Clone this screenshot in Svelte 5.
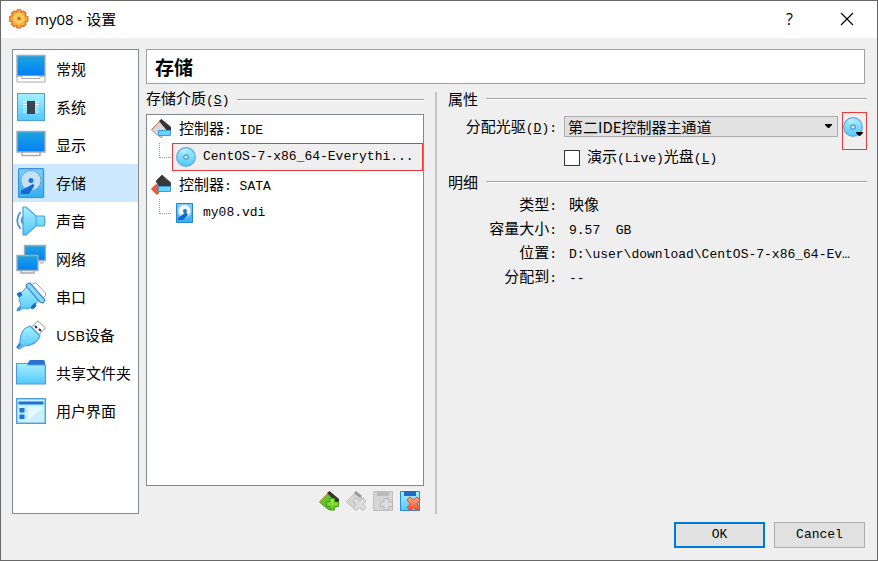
<script>
	const sections = [
		{ id: 'general', label: '常规' },
		{ id: 'system', label: '系统' },
		{ id: 'display', label: '显示' },
		{ id: 'storage', label: '存储' },
		{ id: 'audio', label: '声音' },
		{ id: 'network', label: '网络' },
		{ id: 'serial', label: '串口' },
		{ id: 'usb', label: 'USB设备' },
		{ id: 'shared', label: '共享文件夹' },
		{ id: 'ui', label: '用户界面' }
	];

	const details = [
		{ name: '类型', text: '映像', mono: '' },
		{ name: '容量大小', text: '', mono: '9.57  GB' },
		{ name: '位置', text: '', mono: 'D:\\user\\download\\CentOS-7-x86_64-Ev…' },
		{ name: '分配到', text: '', mono: '--' }
	];

	let current = $state('storage');
	let medium = $state('cd');
	let live = $state(false);
</script>

{#snippet disc()}
	<circle cx="10" cy="10" r="9.3" fill="url(#cyan)" stroke="#6ba7dc" stroke-width="1.3" />
	<path d="M10 10L4 3.5A9 9 0 0 1 10 1.5z" fill="#fff" opacity=".25" />
	<circle cx="10" cy="10" r="2.2" fill="#d8f3fc" stroke="#4d8fd0" stroke-width="1.2" />
{/snippet}

{#snippet monitor()}
	<path d="M1 1.5h28v20.5h-28z" fill="url(#screen)" stroke="#a4abb2" stroke-width="1.4" />
{/snippet}

<svg class="defs" width="0" height="0" aria-hidden="true">
	<defs>
		<linearGradient id="screen" x2="0" y2="1">
			<stop stop-color="#1ea5de" />
			<stop offset="1" stop-color="#007ff8" />
		</linearGradient>
		<linearGradient id="cyan" x2="0" y2="1">
			<stop stop-color="#a6f0ff" />
			<stop offset="1" stop-color="#52c8fa" />
		</linearGradient>
		<linearGradient id="disk" x2="0" y2="1">
			<stop stop-color="#7bd0f8" />
			<stop offset="1" stop-color="#35aef0" />
		</linearGradient>
		<linearGradient id="green" x2="0" y2="1">
			<stop stop-color="#a8ec50" />
			<stop offset="1" stop-color="#55cc10" />
		</linearGradient>
		<linearGradient id="red" x2="0" y2="1">
			<stop stop-color="#ffad83" />
			<stop offset="1" stop-color="#ef4a28" />
		</linearGradient>
		<radialGradient id="gear">
			<stop stop-color="#ffdd62" />
			<stop offset="1" stop-color="#f59a30" />
		</radialGradient>
	</defs>
</svg>

<div class="window">
	<header class="titlebar">
		<svg class="gear" width="20" height="20" viewBox="0 0 20 20">
			<path
				d="M7.5 3l.7-2.2h3.6l.7 2.2 2-1 2.7 2.5-1.2 2.2 2.9.8v4.7l-2.7.7 1 2.3-2.6 2.5-2.3-1.1-.9 2.4H8l-.8-2.4-2.3 1.1-2.6-2.5 1.1-2.3-2.6-.7V7.5l2.7-.7L2.4 4.5 5 2z"
				fill="url(#gear)"
				stroke="#d86a25"
				stroke-width="1.1"
				stroke-linejoin="round"
			/>
			<circle cx="10" cy="9.5" r="4.5" fill="none" stroke="#ffe078" />
			<circle cx="10" cy="9.5" r="1.7" fill="#c4681c" />
		</svg>
		<h1>my08 - 设置</h1>
		<button type="button" class="caption-btn" aria-label="帮助">?</button>
		<button type="button" class="caption-btn" aria-label="关闭">
			<svg width="14" height="14" viewBox="0 0 14 14">
				<path d="M1 1l12 12M13 1L1 13" stroke="#000" stroke-width="1.2" />
			</svg>
		</button>
	</header>

	<div class="content">
		<nav class="sidebar" aria-label="设置">
			{#each sections as section (section.id)}
				<button
					type="button"
					class="nav-item"
					class:active={current === section.id}
					onclick={() => (current = section.id)}
				>
					<svg width="30" height="30" viewBox="0 0 30 30">
						{#if section.id === 'general'}
							<path d="M1 21h28v7H1z" fill="#fff" stroke="#a4abb2" />
							{@render monitor()}
							<path d="M6 22v2.5h18V22" fill="#fff" stroke="#a4abb2" />
						{:else if section.id === 'system'}
							<rect x="1.5" y="1.5" width="27" height="27" fill="url(#cyan)" stroke="#4e9edb" />
							<path
								d="M7 10h16M7 12.5h16M7 15h16M7 17.5h16M7 20h16"
								stroke="#eefcff"
								stroke-width="1.2"
							/>
							<rect x="11" y="9" width="8" height="13" fill="#3b4250" />
						{:else if section.id === 'display'}
							<path d="M6 22v3.5h18V22" fill="#fff" stroke="#a4abb2" stroke-width="1.4" />
							{@render monitor()}
						{:else if section.id === 'storage'}
							<rect
								x="2.6"
								y=".6"
								width="25"
								height="29"
								rx="1"
								fill="url(#disk)"
								stroke="#3c8fd6"
								stroke-width="1.2"
							/>
							<circle cx="15" cy="12.5" r="10" fill="#c5e1f5" stroke="#6aa9dd" />
							<circle cx="15" cy="12.5" r="2.5" fill="#1976d2" />
							<path d="M17 16l1.5 1.5L13 26H5v-3.5z" fill="#1269ce" />
						{:else if section.id === 'audio'}
							<path
								d="M4.5 6Q-2 14.5 4.5 23M8 10Q3 14.5 8 19"
								fill="none"
								stroke="#4a94d6"
								stroke-width="1.8"
							/>
							<path
								d="M7 1h3l10 9h8q2 5 0 10h-8L10 29H7z"
								fill="url(#cyan)"
								stroke="#4e9edb"
								stroke-width="1.2"
							/>
							<path d="M20 10v10" stroke="#4e9edb" />
						{:else if section.id === 'network'}
							<path d="M8.500 1.5h21v15h-21z" fill="url(#screen)" stroke="#a4abb2" stroke-width="1.4" />
							<path d="M24 17v2h3v-2" fill="#fff" stroke="#a4abb2" />
							<path d="M5 26v3h13v-3" fill="#fff" stroke="#a4abb2" stroke-width="1.4" />
							<path d="M1 11.500h21v15H1z" fill="url(#screen)" stroke="#a4abb2" stroke-width="1.4" />
						{:else if section.id === 'serial'}
							<path d="M15 3l3-2 2 0 9.500 10v3l-3 2z" fill="#fff" stroke="#9ca3aa" />
							<path
								d="M4 12l8-8 10 11 1 3-6 7-6 2-4-1-4 3-2-2 4-4-2-5z"
								fill="url(#cyan)"
								stroke="#4e9edb"
							/>
							<path
								d="M11 2l3-1 15 17-2 3-3-1L10 4z"
								fill="#8bdcfc"
								stroke="#3d86d2"
								stroke-width="1.2"
							/>
							<path d="M1 12l3-2 2 3-3 2zM16 24l3-3 1 3-3 3-2-1z" fill="#1c6fd2" stroke="#1c6fd2" />
							<path d="M1 29l4-4" stroke="#3d86d2" stroke-width="1.6" />
						{:else if section.id === 'usb'}
							<path d="M15.5 7L22 .8 29.5 8 23 14.5z" fill="#fff" stroke="#8d949b" />
							<path d="M19 6l2 2M23 9l2 2" stroke="#333" stroke-width="2" />
							<path
								d="M14 6l10 10q-3 9-16 10l-5 3-2-2 3-5Q4 9 14 6z"
								fill="url(#cyan)"
								stroke="#519fda"
								stroke-width="1.2"
							/>
							<path d="M1 28l4-4" stroke="#3a87d2" stroke-width="2" />
						{:else if section.id === 'shared'}
							<path d="M11 6l3-4h14l1 2v4H11z" fill="#2a71d2" />
							<path d="M.6 5.5h10l2 1.500h16.800V26H.6z" fill="url(#cyan)" stroke="#4e9edb" stroke-width="1.2" />
						{:else}
							<rect x=".7" y="2.7" width="28.600" height="24.600" fill="#c3f2fd" stroke="#4e9edb" stroke-width="1.4" />
							<path d="M2.500 5.500h25v3h-25zM3.500 12h5v4.500h-5zM3.500 18.500h5V23h-5z" fill="#2370d4" />
							<path d="M12 11h14v14H12z" fill="#e2f9ff" />
							<path d="M12 25L26 12v13z" fill="#ceefff" />
						{/if}
					</svg>
					<span>{section.label}</span>
				</button>
			{/each}
		</nav>

		<main class="main">
			<h2 class="page-title">存储</h2>

			<div class="panels">
				<section class="media">
					<h3 class="group-title">
						<span>存储介质<span class="mono">(<u>S</u>)</span></span>
					</h3>
					<div class="tree">
						<div class="controller">
							<svg width="20" height="20" viewBox="0 0 20 20">
								<path d="M10 .5l9 8-9 10.500L.5 11z" fill="#dbd7d6" stroke="#a39d9c" />
								<path d="M.5 11L10 1" stroke="#e47b55" />
								<path d="M8 2l2.500-2L20 8v5h-3z" fill="#333" />
								<path d="M7.500 11.500h12v5h-12z" fill="#6bd5ff" stroke="#3a9de2" />
							</svg>
							<span>控制器<span class="mono">: IDE</span></span>
						</div>
						<div class="branch">
							<span class="twig"></span>
							<button
								type="button"
								class="medium outlined"
								class:selected={medium === 'cd'}
								onclick={() => (medium = 'cd')}
							>
								<svg width="20" height="20" viewBox="0 0 20 20">{@render disc()}</svg>
								<span class="mono">CentOS-7-x86_64-Everythi...</span>
							</button>
						</div>
						<div class="controller">
							<svg width="20" height="20" viewBox="0 0 20 20">
								<path d="M5 6l6-6 9 8v6H9z" fill="#383838" stroke="#555" />
								<path d="M.5 14L5 9.500l5 5L6 19.500z" fill="#ef5b34" stroke="#c8482c" />
								<path d="M7.500 11.500h12v5h-12z" fill="#6bd5ff" stroke="#3a9de2" />
							</svg>
							<span>控制器<span class="mono">: SATA</span></span>
						</div>
						<div class="branch">
							<span class="twig"></span>
							<button
								type="button"
								class="medium"
								class:selected={medium === 'hd'}
								onclick={() => (medium = 'hd')}
							>
								<svg width="20" height="20" viewBox="0 0 20 20">
									<path d="M.5.5h16v19H.5z" fill="url(#disk)" stroke="#2384d2" />
									<circle cx="8.500" cy="8" r="6.500" fill="#eff8fd" stroke="#92c9ef" />
									<circle cx="9" cy="8" r="2" fill="#1976d2" />
									<path d="M10 9l2 3-5 5H2v-2z" fill="#1269ce" />
								</svg>
								<span class="mono">my08.vdi</span>
							</button>
						</div>
					</div>
					<div class="toolbar">
						<button type="button" aria-label="添加控制器">
							<svg width="20" height="20" viewBox="0 0 20 20">
								<path d="M10 1l9 8-9 10L.5 11z" fill="#6cc02e" stroke="#588c34" />
								<path d="M.5 11L10 1" stroke="#e89265" />
								<path d="M8 2l2.500-2L20 8v4h-2z" fill="#333" />
								<path
									d="M11 7.500h4.500V11h4v4.500h-4V19H11v-3.500H7.500V11H11z"
									fill="url(#green)"
									stroke="#3d9d15"
								/>
							</svg>
						</button>
						<button type="button" aria-label="删除控制器" disabled>
							<svg width="20" height="20" viewBox="0 0 20 20">
								<path d="M10 1l8 8-8 10L.5 11z" fill="#d5d5d5" stroke="#b9b9b9" />
								<path d="M8 2l2-2 6 5-2 2z" fill="#999" />
								<path
									d="M10 7l3.500 3L17 7l3 3-3 3.500 3 3-3 3-3.500-3-3.500 3-3-3 3-3L7 10z"
									fill="#dedede"
									stroke="#b5b5b5"
								/>
							</svg>
						</button>
						<button type="button" aria-label="添加虚拟介质" disabled>
							<svg width="20" height="20" viewBox="0 0 20 20">
								<path d="M.5.5h19v19H.5z" fill="#d5d5d5" stroke="#c0c0c0" />
								<path d="M4 0h12v5H4z" fill="#bbb" />
								<path
									d="M11 7.500h4.500V11h4v4.500h-4V19H11v-3.500H7.500V11H11z"
									fill="#ddd"
									stroke="#b7b7b7"
								/>
							</svg>
						</button>
						<button type="button" aria-label="删除虚拟介质">
							<svg width="20" height="20" viewBox="0 0 20 20">
								<path d="M.5.5h19v19H.5z" fill="url(#cyan)" stroke="#2589db" />
								<path d="M4 0h12v5H4z" fill="#236ac8" />
								<path
									d="M10 6l3.500 3L17 6l3 3-3 4 3 3.500-3 3-3.500-3-3.500 3-3-3 3-3.500L7 9z"
									fill="url(#red)"
									stroke="#de4b2c"
								/>
							</svg>
						</button>
					</div>
				</section>

				<section class="properties">
					<h3 class="group-title">属性</h3>
					<div class="row drive">
						<label class="row-label" for="drive">分配光驱<span class="mono">(<u>D</u>):</span></label>
						<div class="select-wrap">
							<select id="drive">
								<option>第二IDE控制器主通道</option>
							</select>
							<svg width="9" height="5" viewBox="0 0 9 5">
								<path d="M1 0h7v1L5 4H4L1 1z" />
							</svg>
						</div>
						<button type="button" class="disc-btn" aria-label="选择虚拟光盘">
							<svg width="22" height="24" viewBox="0 0 22 24">
								{@render disc()}
								<path d="M13 15h7v1l-3 3h-1l-3-3z" />
							</svg>
						</button>
					</div>
					<label class="live">
						<input type="checkbox" bind:checked={live} />
						<span>演示<span class="mono">(Live)</span>光盘<span class="mono">(<u>L</u>)</span></span>
					</label>

					<h3 class="group-title">明细</h3>
					<dl class="details">
						{#each details as item}
							<div class="row">
								<dt class="row-label">{item.name}<span class="mono">:</span></dt>
								<dd>{item.text}<span class="mono">{item.mono}</span></dd>
							</div>
						{/each}
					</dl>
				</section>
			</div>
		</main>
	</div>

	<footer class="footer">
		<button type="button" class="dialog-btn primary">OK</button>
		<button type="button" class="dialog-btn">Cancel</button>
	</footer>
</div>

<style>
	:global(*, *::before, *::after) {
		box-sizing: border-box;
		margin: 0;
		padding: 0;
	}

	:global(body) {
		background: #efefef;
	}

	button,
	select {
		font: inherit;
		color: inherit;
		border: none;
		border-radius: 0;
		background: none;
	}

	svg {
		display: block;
		flex-shrink: 0;
	}

	.defs {
		position: absolute;
	}

	.window {
		min-height: 100vh;
		display: flex;
		flex-direction: column;
		border: 1px solid #686868;
		background: #efefef;
		color: #000;
		font-family: 'Noto Sans CJK SC', sans-serif;
		font-size: 15px;
		line-height: 20px;
	}

	.mono {
		font-family: 'Liberation Mono', monospace;
		font-size: 13px;
		white-space: pre;
	}

	/* Title bar */
	.titlebar {
		height: 37px;
		display: flex;
		align-items: center;
		padding: 0 2px 2px 8px;
		background: #fff;
	}

	.titlebar h1 {
		flex: 1;
		margin-left: 6px;
		font-family: 'Open Sans', 'Noto Sans CJK SC', sans-serif;
		font-size: 15px;
		font-weight: 400;
	}

	.caption-btn {
		width: 57px;
		height: 35px;
		display: flex;
		align-items: center;
		justify-content: center;
		font-family: 'Open Sans', sans-serif;
		font-size: 16px;
	}

	/* Sections */
	.content {
		flex: 1;
		display: flex;
		gap: 7px;
		padding: 11px 12px 0 11px;
	}

	.sidebar {
		width: 127px;
		flex-shrink: 0;
		border: 1px solid #828790;
		background: #fff;
	}

	.nav-item {
		width: 100%;
		height: 38px;
		display: flex;
		align-items: center;
		gap: 10px;
		padding-left: 3px;
		font-family: 'Open Sans', 'Noto Sans CJK SC', sans-serif;
		text-align: left;
		white-space: nowrap;
	}

	.nav-item.active {
		background: #cce8ff;
	}

	.main {
		flex: 1;
		min-width: 0;
		display: flex;
		flex-direction: column;
		gap: 4px;
	}

	.page-title {
		height: 35px;
		padding-left: 8px;
		border: 1px solid #a0a0a0;
		background: #fff;
		font-size: 19px;
		font-weight: 700;
		line-height: 33px;
	}

	.panels {
		flex: 1;
		display: flex;
	}

	.group-title {
		display: flex;
		align-items: center;
		gap: 8px;
		font-size: 15px;
		font-weight: 400;
		white-space: nowrap;
	}

	.group-title::after {
		content: '';
		flex: 1;
		height: 2px;
		border-top: 1px solid #a0a0a0;
		background: #fff;
	}

	/* Media tree */
	.media {
		width: 278px;
		flex-shrink: 0;
		display: flex;
		flex-direction: column;
	}

	.tree {
		flex: 1;
		margin-top: 3px;
		border: 1px solid #828790;
		background: #fff;
	}

	.controller {
		height: 28px;
		display: flex;
		align-items: center;
		gap: 8px;
		padding-left: 4px;
	}

	.branch {
		height: 28px;
		display: flex;
	}

	.twig {
		width: 12px;
		height: 15px;
		margin-left: 12px;
		border-left: 1px dotted #999;
		border-bottom: 1px dotted #999;
	}

	.medium {
		flex: 1;
		display: flex;
		align-items: center;
		gap: 7px;
		margin-left: 1px;
		padding-left: 3px;
		border: 1px solid transparent;
		text-align: left;
	}

	.medium.selected {
		background: #efefef;
	}

	.medium.outlined {
		border-color: #f0383a;
	}

	.toolbar {
		display: flex;
		justify-content: flex-end;
		gap: 7px;
		padding: 5px 4px 3px 0;
	}

	/* Properties */
	.properties {
		flex: 1;
		min-width: 0;
		margin: 4px -2px 0 11px;
		padding-left: 11px;
		border-left: 2px solid #c3c3c3;
	}

	.properties .group-title {
		margin-top: -3px;
	}

	.row {
		display: flex;
		align-items: center;
	}

	.row-label {
		width: 109px;
		flex-shrink: 0;
		text-align: right;
		white-space: nowrap;
	}

	.drive {
		height: 38px;
		align-items: flex-start;
		margin-top: 3px;
	}

	.drive .row-label {
		padding-top: 4px;
	}

	.select-wrap {
		position: relative;
		flex: 1;
		min-width: 0;
		margin-top: 4px;
		margin-left: 7px;
	}

	.select-wrap select {
		width: 100%;
		height: 21px;
		display: block;
		padding-left: 3px;
		appearance: none;
		border: 1px solid #adadad;
		background: #e1e1e1;
		line-height: 19px;
	}

	.select-wrap svg {
		position: absolute;
		top: 8px;
		right: 5px;
		pointer-events: none;
	}

	.disc-btn {
		width: 25px;
		height: 38px;
		margin-left: 4px;
		padding-bottom: 4px;
		border: 1px solid #f0383a;
	}

	.live {
		width: fit-content;
		display: flex;
		align-items: center;
		gap: 7px;
		margin-top: -4px;
		margin-left: 116px;
	}

	.live input {
		width: 16px;
		height: 16px;
		appearance: none;
		border: 1px solid #333;
		background: #fff;
	}

	.live input:checked {
		background: #0078d7;
	}

	.properties .live + .group-title {
		margin-top: 3px;
	}

	.details .row {
		height: 24px;
	}

	.details {
		margin-top: 1px;
	}

	.details dd {
		margin-left: 12px;
		white-space: nowrap;
	}

	/* Dialog buttons */
	.footer {
		display: flex;
		justify-content: flex-end;
		gap: 9px;
		padding: 8px 12px 12px;
	}

	.dialog-btn {
		width: 91px;
		height: 26px;
		border: 1px solid #adadad;
		background: #e1e1e1;
		font-family: 'Liberation Mono', monospace;
		font-size: 13px;
	}

	.dialog-btn.primary {
		border: 2px solid #0078d7;
	}
</style>
